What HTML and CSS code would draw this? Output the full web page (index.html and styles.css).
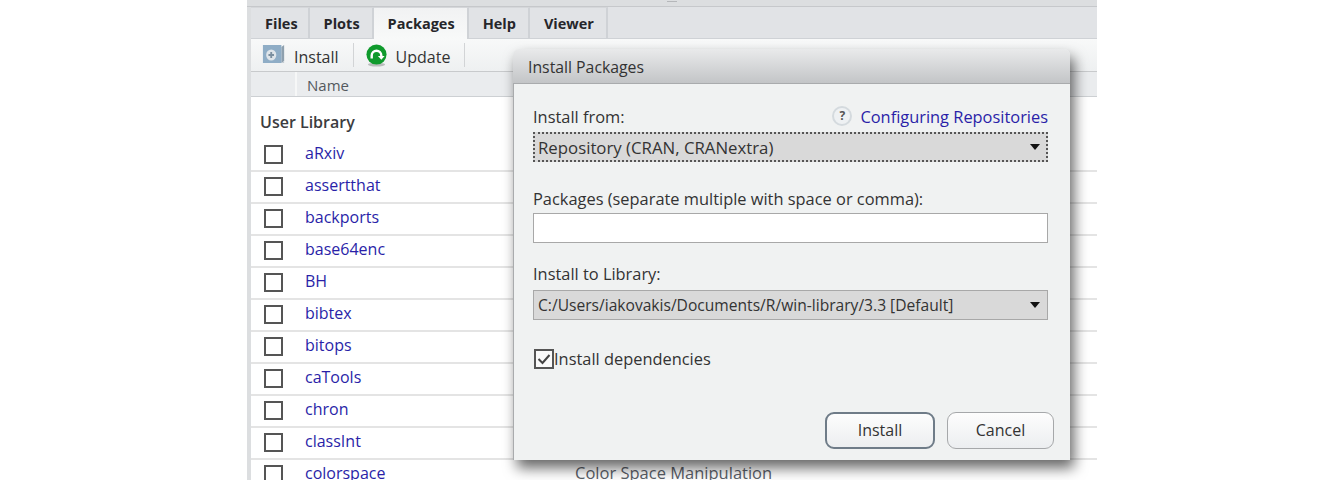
FILE: index.html
```html
<!DOCTYPE html>
<html lang="en">
<head>
  <meta charset="UTF-8" />
  <title>Install Packages</title>
  <link rel="stylesheet" href="styles.css">
</head>
<body>
  <div class="pane">
    <div class="top-strip"><span class="grip"></span></div>

    <div class="tabs">
      <div class="tab first">Files</div>
      <div class="tab">Plots</div>
      <div class="tab active">Packages</div>
      <div class="tab">Help</div>
      <div class="tab">Viewer</div>
    </div>

    <div class="toolbar">
      <div class="tool">
        <svg width="24" height="22" viewBox="0 0 26 22" preserveAspectRatio="none">
          <path d="M21 3l3-2v16l-3 2z" fill="#8ea0ae"/>
          <rect x="1" y="1" width="20" height="18" fill="#8fadc6"/>
          <path d="M21 19l3-2v2z" fill="#c4ccd2"/>
          <circle cx="10" cy="11" r="5.500" fill="#dfe5ea"/>
          <path d="M10 8v6M7 11h6" stroke="#7b8f9f" stroke-width="2"/>
        </svg>
        <span>Install</span>
      </div>
      <div class="tool update">
        <svg width="23" height="23" viewBox="0 0 24 24">
          <ellipse cx="12" cy="21.500" rx="9" ry="2" fill="#b9bcbc"/>
          <circle cx="12" cy="11" r="10.500" fill="#0f9a2c"/>
          <path d="M7 15v-3a5 5 0 0 1 10 0v1" fill="none" stroke="#fff" stroke-width="2.500"/>
          <path d="M13.500 12.500h7l-3.500 4z" fill="#fff"/>
        </svg>
        <span>Update</span>
      </div>
    </div>

    <div class="list-head">
      <div class="head-check"></div>
      <div class="head-name">Name</div>
    </div>

    <div class="lib-title">User Library</div>
    <div class="row"><span class="box"></span><a class="pkg">aRxiv</a></div>
    <div class="row"><span class="box"></span><a class="pkg">assertthat</a></div>
    <div class="row"><span class="box"></span><a class="pkg">backports</a></div>
    <div class="row"><span class="box"></span><a class="pkg">base64enc</a></div>
    <div class="row"><span class="box"></span><a class="pkg">BH</a></div>
    <div class="row"><span class="box"></span><a class="pkg">bibtex</a></div>
    <div class="row"><span class="box"></span><a class="pkg">bitops</a></div>
    <div class="row"><span class="box"></span><a class="pkg">caTools</a></div>
    <div class="row"><span class="box"></span><a class="pkg">chron</a></div>
    <div class="row"><span class="box"></span><a class="pkg">classInt</a></div>
    <div class="row"><span class="box"></span><a class="pkg">colorspace</a><span class="desc">Color Space Manipulation</span></div>

    <!-- modal sits over the package list -->
    <div class="dialog">
      <div class="dialog-title">Install Packages</div>
      <div class="dialog-body">
        <div class="label-row">
          <span>Install from:</span>
          <span class="help-link"><span class="help-icon">?</span><a class="link">Configuring Repositories</a></span>
        </div>
        <div class="select focused"><span>Repository (CRAN, CRANextra)</span><span class="arrow"></span></div>

        <div class="label packages-label">Packages (separate multiple with space or comma):</div>
        <div class="text-input"></div>

        <div class="label library-label">Install to Library:</div>
        <div class="select library"><span>C:/Users/iakovakis/Documents/R/win-library/3.3 [Default]</span><span class="arrow"></span></div>

        <div class="check-row">
          <svg class="check" width="20" height="20" viewBox="0 0 20 20">
            <rect x="1" y="1" width="18" height="18" fill="#fafafa" stroke="#555" stroke-width="2"/>
            <path d="M4.500 10l4 4 7-8" fill="none" stroke="#444" stroke-width="2"/>
          </svg>
          <span>Install dependencies</span>
        </div>

        <div class="buttons">
          <div class="btn default">Install</div>
          <div class="btn">Cancel</div>
        </div>
      </div>
    </div>
  </div>
</body>
</html>
```

FILE: styles.css
```css
html, body {
  margin: 0;
  height: 480px;
  overflow: hidden;
  background-color: #fff;
}

body {
  font-family: "Open Sans", "Noto Sans", sans-serif;
  font-size: 16px;
  color: #333;
}

.pane {
  position: relative;
  width: 846px;
  height: 480px;
  margin-left: 247px;
  border-left: 4px solid #dcdee0;
}

.top-strip {
  height: 6px;
  margin-left: -4px;
  background-color: #dcdee0;
  border-bottom: 1px solid #c6c8cb;
  display: flex;
  justify-content: center;
}

.grip {
  width: 10px;
  height: 1px;
  margin: 1px 0 0 -1px;
  background-color: #b5b7ba;
}

/* Tabs */
.tabs {
  display: flex;
  height: 31px;
  background-color: #e1e3e6;
  border-bottom: 1px solid #cfd2d6;
}

.tab {
  display: flex;
  align-items: center;
  padding: 0 12px 0 14px;
  height: 31px;
  border-right: 2px solid #cfd2d6;
  border-top: 1px solid #d5d7da;
  box-sizing: border-box;
  font-weight: 700;
  font-size: 14.500px;
  color: #26262a;
}

.tab.first {
  padding-right: 10px;
}

.tab.active {
  background: linear-gradient(#f1f2f3, #f8f9f9);
  height: 32px;
  position: relative;
}

.toolbar {
  display: flex;
  height: 32px;
  align-items: center;
  background: linear-gradient(#f8f9f9, #eef0f1);
  border-bottom: 1px solid #c8cacc;
}

.tool {
  display: flex;
  align-items: center;
  gap: 8px;
  height: 24px;
  padding: 0 14px 0 11px;
  border-right: 1px solid #d2d4d6;
  font-size: 16px;
  color: #333;
}

.tool span {
  margin-top: 3px;
}

.tool.update {
  padding-left: 11px;
}

.list-head {
  display: flex;
  height: 24px;
  background-color: #eaecee;
  border-bottom: 1px solid #cdd0d3;
}

.head-check {
  width: 44px;
  border-right: 2px solid #f6f7f7;
}

.head-name {
  padding-left: 10px;
  line-height: 26px;
  font-size: 15px;
  color: #54595e;
}

.lib-title {
  height: 43px;
  padding: 14px 0 0 9px;
  box-sizing: border-box;
  font-weight: 600;
  font-size: 16px;
  color: #3c3c40;
}

.row {
  display: flex;
  align-items: center;
  height: 32px;
  box-sizing: border-box;
  border-bottom: 2px solid #e4e4e4;
  padding: 0 0 2px 13px;
}

.box {
  width: 15px;
  height: 15px;
  flex: none;
  border: 2px solid #555;
  background-color: #fff;
}

.pkg {
  width: 270px;
  margin: -2px 0 0 22px;
  color: #2a1fa8;
  font-size: 16px;
}

.desc {
  margin-top: -4px;
  color: #5a6068;
  font-size: 16.500px;
}

/* Dialog */
.dialog {
  position: absolute;
  left: 262px;
  top: 49px;
  width: 557px;
  height: 411px;
  display: flex;
  flex-direction: column;
  border-radius: 6px 6px 0 0;
  background-color: #f0f2f2;
  box-shadow: 4px 8px 14px rgba(0, 0, 0, 0.6);
}

.dialog-title {
  height: 34px;
  padding-left: 15px;
  line-height: 36px;
  border-radius: 6px 6px 0 0;
  border-bottom: 1px solid #a9abad;
  background: linear-gradient(#e9eaeb, #c3c5c7);
  font-size: 15.800px;
  color: #333;
}

.dialog-body {
  flex: 1;
  display: flex;
  flex-direction: column;
  padding: 20px 22px 11px 19px;
  border-left: 1px solid #a9abad;
}

.label-row {
  display: flex;
  justify-content: space-between;
  align-items: center;
  height: 24px;
  color: #333;
  font-size: 16.400px;
}

.help-link {
  display: flex;
  align-items: center;
  gap: 8px;
}

.help-icon {
  width: 20px;
  height: 20px;
  border-radius: 50%;
  box-sizing: border-box;
  border: 2px solid #d4dade;
  background-color: #eef1f3;
  color: #555;
  font-size: 12px;
  font-weight: 700;
  line-height: 16px;
  text-align: center;
}

.link {
  color: #2a1fa8;
}

.select {
  display: flex;
  align-items: center;
  justify-content: space-between;
  height: 30px;
  padding: 0 7px 0 4px;
  box-sizing: border-box;
  background-color: #d9d9d9;
  border: 1px solid #a8a8a8;
  font-size: 16.800px;
  color: #333;
}

.select.library {
  font-size: 15.600px;
}

.select.focused {
  margin-top: 4px;
  border: 2px dotted #555;
  padding: 0 6px 0 3px;
}

.arrow {
  width: 0;
  height: 0;
  border-left: 5px solid transparent;
  border-right: 5px solid transparent;
  border-top: 6px solid #111;
}

.label {
  font-size: 16.400px;
  color: #333;
}

.packages-label {
  margin-top: 24px;
  height: 27px;
  line-height: 26px;
}

.text-input {
  height: 30px;
  box-sizing: border-box;
  background-color: #fff;
  border: 1px solid #a8a8a8;
}

.library-label {
  margin-top: 17px;
  height: 30px;
  line-height: 28px;
}

.check-row {
  display: flex;
  align-items: center;
  margin-top: 27px;
  font-size: 16.400px;
  color: #333;
}

.check {
  flex: none;
  margin-left: 1px;
}

.buttons {
  display: flex;
  justify-content: flex-end;
  gap: 12px;
  margin-top: auto;
  margin-right: -6px;
}

.btn {
  width: 107px;
  height: 37px;
  box-sizing: border-box;
  border: 1px solid #a6a8aa;
  border-radius: 9px;
  background: linear-gradient(#fdfdfd, #eceef0);
  font-size: 16px;
  line-height: 35px;
  text-align: center;
  color: #333;
}

.btn.default {
  width: 110px;
  border: 2px solid #6f7c88;
  line-height: 33px;
}
```
